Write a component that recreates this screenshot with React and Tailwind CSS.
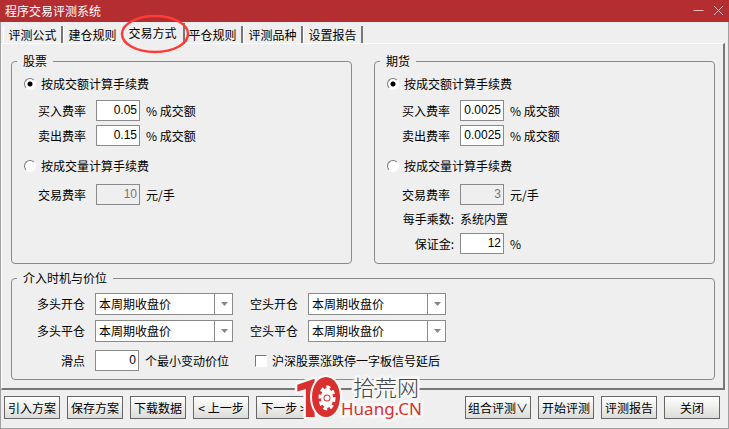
import { useState } from "react";

const TABS = ["评测公式", "建仓规则", "交易方式", "平仓规则", "评测品种", "设置报告"];

function Group({ title, className = "", children }) {
  return (
    <fieldset className={`min-w-0 rounded-[4px] border border-[#8a8a8a] ${className}`}>
      <legend className="ml-[5px] px-[6px]">{title}</legend>
      {children}
    </fieldset>
  );
}

function Radio({ id, name, checked, onChange, children }) {
  return (
    <div className="flex items-center gap-[5px] pl-3">
      <input
        type="radio"
        id={id}
        name={name}
        checked={checked}
        onChange={onChange}
        className="size-3 appearance-none rounded-full border border-t-[#777] border-l-[#777] border-r-white border-b-white bg-white bg-[radial-gradient(circle,#000_2px,transparent_3px)] not-checked:bg-none"
      />
      <label htmlFor={id}>{children}</label>
    </div>
  );
}

function Field({ id, label, value, unit, disabled, colon }) {
  return (
    <div className="flex items-center">
      <label htmlFor={id} className={`w-[84px] text-right ${colon ? "pr-[6px]" : "pr-[10px]"}`}>
        {label}
      </label>
      <input
        id={id}
        type="text"
        defaultValue={value}
        disabled={disabled}
        className="h-[21px] w-11 border border-[#8a8a8a] bg-white px-[2px] pb-px text-right font-['Liberation_Sans',sans-serif] disabled:bg-[#efefef] disabled:text-[#777]"
      />
      <span className="pl-[6px]">{unit}</span>
    </div>
  );
}

function FeeGroup({ id, title, buy, sell, perLot, indent = "", children }) {
  const [mode, setMode] = useState("amount");

  return (
    <Group title={title} className="flex-1 pt-[7px] pb-[9px]">
      <Radio id={`${id}-amount`} name={id} checked={mode === "amount"} onChange={() => setMode("amount")}>
        按成交额计算手续费
      </Radio>
      <div className={`mt-2 mb-3 flex flex-col gap-1 ${indent}`}>
        <Field id={`${id}-buy`} label="买入费率" value={buy} unit="% 成交额" />
        <Field id={`${id}-sell`} label="卖出费率" value={sell} unit="% 成交额" />
      </div>
      <Radio id={`${id}-volume`} name={id} checked={mode === "volume"} onChange={() => setMode("volume")}>
        按成交量计算手续费
      </Radio>
      <div className={`mt-[10px] flex flex-col gap-[6px] ${indent}`}>
        <Field id={`${id}-lot`} label="交易费率" value={perLot} unit="元/手" disabled={mode === "amount"} />
        {children}
      </div>
    </Group>
  );
}

function PriceSelect({ id, label }) {
  return (
    <div className="flex items-center">
      <label htmlFor={id} className="w-[83px] pr-[10px] text-right">
        {label}
      </label>
      <div className="relative">
        <select
          id={id}
          className="h-[22px] w-[138px] appearance-none border border-[#8a8a8a] bg-white pl-[3px]"
        >
          <option>本周期收盘价</option>
        </select>
        <span className="pointer-events-none absolute inset-y-0 right-0 flex w-[19px] items-center justify-center border-l border-[#8a8a8a]">
          <svg width="7" height="4" viewBox="0 0 7 4" fill="#888">
            <path d="M0 0h7L3.500 4z" />
          </svg>
        </span>
      </div>
    </div>
  );
}

function Button({ wide, children }) {
  return (
    <button
      type="button"
      className={`h-[23px] shrink-0 border border-[#666] bg-linear-to-b from-white to-[#dcdcd8] whitespace-nowrap ${wide ? "w-[66px]" : "w-14"}`}
    >
      {children}
    </button>
  );
}

function Logo() {
  return (
    <svg
      className="pointer-events-none absolute -top-[22px] left-[289px] overflow-visible"
      width="140"
      height="60"
      viewBox="-4 -4 140 60"
      stroke="#f8f8f8"
      strokeLinejoin="round"
      paintOrder="stroke"
    >
      <text x="-1" y="45" fontFamily="Roboto" fontWeight="900" fontSize="53" fill="#d9302f" strokeWidth="5">
        1
      </text>
      <ellipse cx="32" cy="25" rx="14" ry="20" fill="#d9302f" strokeWidth="4" />
      <ellipse cx="33" cy="26" rx="6" ry="10" fill="#fff" stroke="none" />
      <ellipse cx="33" cy="26" rx="7" ry="11" fill="none" stroke="#fff" strokeWidth="3" strokeDasharray="4 3" />
      <circle cx="33" cy="26" r="2.500" fill="#fff" stroke="#d9302f" strokeWidth="2" />
      <text x="59" y="24" fontFamily="Noto Sans CJK SC" fontWeight="300" fontSize="22" fill="#444" strokeWidth="5">
        拾荒网
      </text>
      <text x="47" y="43" fontFamily="Noto Sans" fontSize="17" fill="#d9302f" strokeWidth="6">
        Huang.CN
      </text>
    </svg>
  );
}

export default function App() {
  const [tab, setTab] = useState("交易方式");

  return (
    <div className="bg-[#efefef] font-['Noto_Sans_CJK_SC',sans-serif] text-xs text-black">
      <header className="flex h-[22px] items-center justify-between bg-[#b32d31] pr-[5px] pb-px pl-[5px] text-white">
        <h1>程序交易评测系统</h1>
        <div className="flex gap-[9px]">
          <button type="button" aria-label="最小化">
            <svg width="11" height="11" viewBox="0 0 11 11" stroke="#e8b8b8">
              <path d="M0.500 5.500h10" />
            </svg>
          </button>
          <button type="button" aria-label="关闭窗口">
            <svg width="11" height="11" viewBox="0 0 11 11" stroke="#e8b8b8">
              <path d="M1 1l9 9M10 1l-9 9" />
            </svg>
          </button>
        </div>
      </header>

      <div className="border-x border-b border-[#a0a0a0] pb-[9px]">
        <nav className="flex h-[21px] items-end pl-[2px]">
          {TABS.map((name) => (
            <button
              key={name}
              type="button"
              onClick={() => setTab(name)}
              className={
                name === tab
                  ? "relative z-10 -mx-[2px] -mb-px h-[21px] w-16 border-r-2 border-l border-r-[#777] border-l-white bg-[#efefef] pb-[2px]"
                  : "h-[17px] w-15 border-r-2 border-l border-r-[#777] border-l-white"
              }
            >
              {name}
              {name === "交易方式" && (
                <svg
                  className="pointer-events-none absolute -top-[9px] -left-[2px]"
                  width="70"
                  height="40"
                  viewBox="0 0 70 40"
                  fill="none"
                  stroke="#ff3b36"
                  strokeWidth="2.500"
                >
                  <ellipse cx="35" cy="20" rx="33" ry="18" />
                </svg>
              )}
            </button>
          ))}
        </nav>

        <main className="mr-[3px] border-t border-r-2 border-b-2 border-l border-t-white border-r-[#777] border-b-[#777] border-l-white pt-[9px] pr-2 pb-2 pl-[9px]">
          <div className="flex gap-[22px]">
            <FeeGroup id="stock" title="股票" buy="0.05" sell="0.15" perLot="10" />
            <FeeGroup id="future" title="期货" buy="0.0025" sell="0.0025" perLot="3" indent="pl-px">
              <div className="flex">
                <span className="w-[84px] pr-[6px] text-right">每手乘数:</span>
                <span>系统内置</span>
              </div>
              <Field id="margin" label="保证金:" value="12" unit="%" colon />
            </FeeGroup>
          </div>

          <Group title="介入时机与价位" className="mt-[6px] pt-[7px] pb-2">
            <div className="flex flex-wrap gap-x-[10px]">
              <div className="flex flex-col gap-[5px]">
                <PriceSelect id="long-open" label="多头开仓" />
                <PriceSelect id="long-close" label="多头平仓" />
              </div>
              <div className="-ml-[18px] flex flex-col gap-[5px]">
                <PriceSelect id="short-open" label="空头开仓" />
                <PriceSelect id="short-close" label="空头平仓" />
              </div>
            </div>
            <div className="mt-2 flex items-center">
              <label htmlFor="slip" className="w-[83px] pr-[10px] text-right">
                滑点
              </label>
              <input
                id="slip"
                type="text"
                defaultValue="0"
                className="h-[21px] w-11 border border-[#8a8a8a] bg-white px-[2px] pb-px text-right font-['Liberation_Sans',sans-serif]"
              />
              <span className="pl-[6px]">个最小变动价位</span>
              <input
                type="checkbox"
                id="delay"
                className="mr-[5px] ml-[26px] size-3 appearance-none border border-t-[#777] border-l-[#777] border-r-white border-b-white bg-white checked:bg-[#777]"
              />
              <label htmlFor="delay">沪深股票涨跌停一字板信号延后</label>
            </div>
          </Group>
        </main>

        <footer className="relative flex justify-between pt-[6px] pr-2 pl-[3px]">
          <div className="flex gap-[7px]">
            <Button>引入方案</Button>
            <Button>保存方案</Button>
            <Button>下载数据</Button>
            <Button>&lt; 上一步</Button>
            <Button>下一步 &gt;</Button>
          </div>
          <div className="flex gap-[7px]">
            <Button wide>组合评测∨</Button>
            <Button>开始评测</Button>
            <Button>评测报告</Button>
            <Button>关闭</Button>
          </div>
          <Logo />
        </footer>
      </div>
    </div>
  );
}
